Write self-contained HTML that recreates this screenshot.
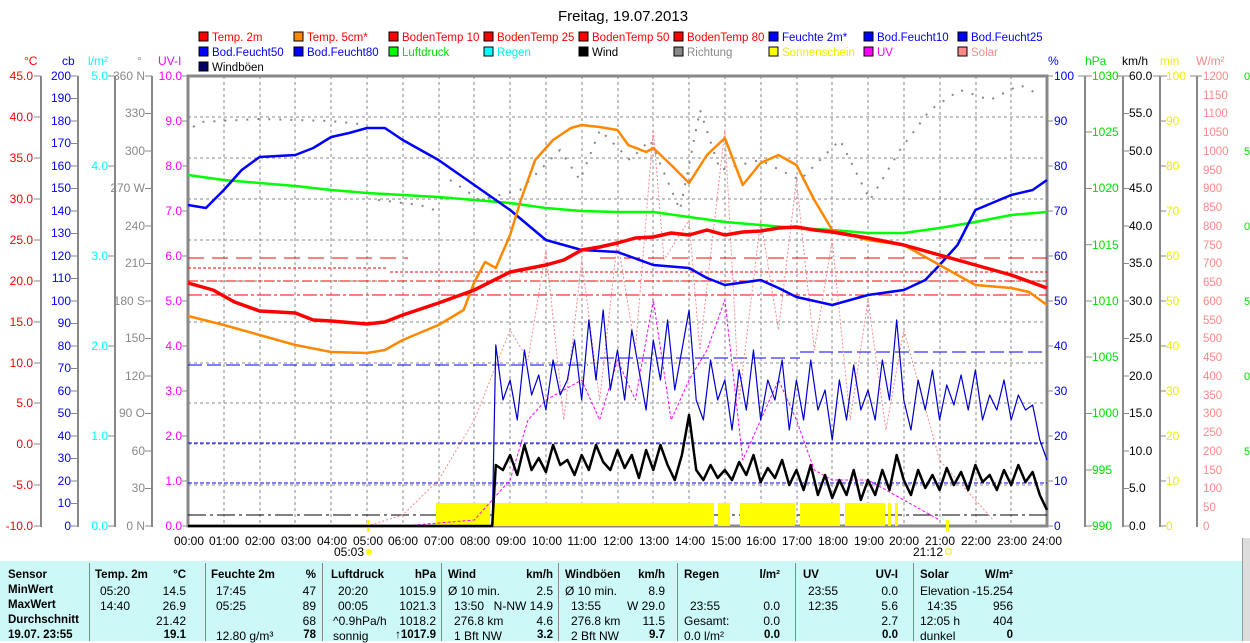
<!DOCTYPE html>
<html><head><meta charset="utf-8"><style>
body{margin:0;width:1250px;height:641px;overflow:hidden;background:#fff;font-family:"Liberation Sans",Arial,sans-serif;position:relative}
svg{position:absolute;left:0;top:0}
.tb{position:absolute;left:0;top:561px;width:1242px;height:80px;background:#ccf8f8;font-size:12px;color:#000}
.tb div{position:absolute;white-space:nowrap}
.b{font-weight:bold;font-size:11.5px}
.r{text-align:right}
.tb .sep{position:absolute;top:2px;width:1px;height:78px;background:#888}
</style></head><body>
<svg width="1250" height="561" font-family="Liberation Sans, Arial, sans-serif" font-size="12">
<text x="623" y="21" font-size="15" text-anchor="middle">Freitag, 19.07.2013</text>
<g font-size="11.5">
<rect x="199" y="32" width="9" height="9" fill="#f00" stroke="#000"/><text x="212" y="41" fill="#f00">Temp. 2m</text>
<rect x="294" y="32" width="9" height="9" fill="#f80" stroke="#000"/><text x="307" y="41" fill="#f00">Temp. 5cm*</text>
<rect x="389" y="32" width="9" height="9" fill="#f00" stroke="#000"/><text x="402" y="41" fill="#f00">BodenTemp 10</text>
<rect x="484" y="32" width="9" height="9" fill="#f00" stroke="#000"/><text x="497" y="41" fill="#f00">BodenTemp 25</text>
<rect x="579" y="32" width="9" height="9" fill="#f00" stroke="#000"/><text x="592" y="41" fill="#f00">BodenTemp 50</text>
<rect x="674" y="32" width="9" height="9" fill="#f00" stroke="#000"/><text x="687" y="41" fill="#f00">BodenTemp 80</text>
<rect x="769" y="32" width="9" height="9" fill="#00f" stroke="#000"/><text x="782" y="41" fill="#00f">Feuchte 2m*</text>
<rect x="864" y="32" width="9" height="9" fill="#00f" stroke="#000"/><text x="877" y="41" fill="#00f">Bod.Feucht10</text>
<rect x="958" y="32" width="9" height="9" fill="#00f" stroke="#000"/><text x="971" y="41" fill="#00f">Bod.Feucht25</text>
<rect x="199" y="47" width="9" height="9" fill="#00f" stroke="#000"/><text x="212" y="56" fill="#00f">Bod.Feucht50</text>
<rect x="294" y="47" width="9" height="9" fill="#00f" stroke="#000"/><text x="307" y="56" fill="#00f">Bod.Feucht80</text>
<rect x="389" y="47" width="9" height="9" fill="#0f0" stroke="#000"/><text x="402" y="56" fill="#0d0">Luftdruck</text>
<rect x="484" y="47" width="9" height="9" fill="#0ff" stroke="#000"/><text x="497" y="56" fill="#0ee">Regen</text>
<rect x="579" y="47" width="9" height="9" fill="#000" stroke="#000"/><text x="592" y="56">Wind</text>
<rect x="674" y="47" width="9" height="9" fill="#888" stroke="#000"/><text x="687" y="56" fill="#888">Richtung</text>
<rect x="769" y="47" width="9" height="9" fill="#ff0" stroke="#000"/><text x="782" y="56" fill="#ee0">Sonnenschein</text>
<rect x="864" y="47" width="9" height="9" fill="#f0f" stroke="#000"/><text x="877" y="56" fill="#f0f">UV</text>
<rect x="958" y="47" width="9" height="9" fill="#f88" stroke="#000"/><text x="971" y="56" fill="#f88">Solar</text>
<rect x="199" y="62" width="9" height="9" fill="#006" stroke="#000"/><text x="212" y="71">Windböen</text>
</g>
<text x="24" y="65" fill="#f00">°C</text><text x="62" y="65" fill="#00f">cb</text><text x="88" y="65" fill="#0ff">l/m²</text><text x="137" y="65" fill="#888">°</text><text x="158" y="65" fill="#f0f">UV-I</text>
<text x="1048" y="65" fill="#00f">%</text><text x="1085" y="65" fill="#0d0">hPa</text><text x="1122" y="65" fill="#000">km/h</text><text x="1160" y="65" fill="#ee0">min</text><text x="1196" y="65" fill="#f88">W/m²</text>
<g stroke="#888" stroke-width="2"><line x1="41" y1="76" x2="41" y2="527"/><line x1="78" y1="76" x2="78" y2="527"/><line x1="115" y1="76" x2="115" y2="527"/><line x1="152" y1="76" x2="152" y2="527"/>
<line x1="1085" y1="76" x2="1085" y2="527"/><line x1="1123" y1="76" x2="1123" y2="527"/><line x1="1160" y1="76" x2="1160" y2="527"/><line x1="1197" y1="76" x2="1197" y2="527"/></g>
<g fill="#f00" text-anchor="end"><text x="33" y="80">45.0</text><text x="33" y="121">40.0</text><text x="33" y="162">35.0</text><text x="33" y="203">30.0</text><text x="33" y="244">25.0</text><text x="33" y="285">20.0</text><text x="33" y="326">15.0</text><text x="33" y="367">10.0</text><text x="33" y="407">5.0</text><text x="33" y="448">0.0</text><text x="33" y="489">-5.0</text><text x="33" y="530">-10.0</text></g>
<g stroke="#888"><path d="M34 76h7M34 117h7M34 158h7M34 199h7M34 240h7M34 281h7M34 322h7M34 363h7M34 403h7M34 444h7M34 485h7M34 526h7M71 76h7M71 98.5h7M71 121h7M71 143.5h7M71 166h7M71 188.5h7M71 211h7M71 233.5h7M71 256h7M71 278.5h7M71 301h7M71 323.5h7M71 346h7M71 368.5h7M71 391h7M71 413.5h7M71 436h7M71 458.5h7M71 481h7M71 503.5h7M71 526h7M108 76h7M108 166h7M108 256h7M108 346h7M108 436h7M108 526h7M145 76h7M145 113.5h7M145 151h7M145 188.5h7M145 226h7M145 263.5h7M145 301h7M145 338.5h7M145 376h7M145 413.5h7M145 451h7M145 488.5h7M145 526h7M182 76h6M182 121h6M182 166h6M182 211h6M182 256h6M182 301h6M182 346h6M182 391h6M182 436h6M182 481h6M182 526h6"/></g>
<g fill="#00f" text-anchor="end"><text x="71" y="80">200</text><text x="71" y="102">190</text><text x="71" y="125">180</text><text x="71" y="147">170</text><text x="71" y="170">160</text><text x="71" y="192">150</text><text x="71" y="215">140</text><text x="71" y="237">130</text><text x="71" y="260">120</text><text x="71" y="282">110</text><text x="71" y="305">100</text><text x="71" y="327">90</text><text x="71" y="350">80</text><text x="71" y="372">70</text><text x="71" y="395">60</text><text x="71" y="417">50</text><text x="71" y="440">40</text><text x="71" y="462">30</text><text x="71" y="485">20</text><text x="71" y="507">10</text><text x="71" y="530">0</text></g>
<g fill="#0ff" text-anchor="end"><text x="108" y="80">5.0</text><text x="108" y="170">4.0</text><text x="108" y="260">3.0</text><text x="108" y="350">2.0</text><text x="108" y="440">1.0</text><text x="108" y="530">0.0</text></g>
<g fill="#888" text-anchor="end"><text x="145" y="80">360 N</text><text x="145" y="117">330</text><text x="145" y="155">300</text><text x="145" y="192">270 W</text><text x="145" y="230">240</text><text x="145" y="267">210</text><text x="145" y="305">180 S</text><text x="145" y="342">150</text><text x="145" y="380">120</text><text x="145" y="417">90  O</text><text x="145" y="455">60</text><text x="145" y="492">30</text><text x="145" y="530">0   N</text></g>
<g fill="#f0f" text-anchor="end"><text x="182" y="80">10.0</text><text x="182" y="125">9.0</text><text x="182" y="170">8.0</text><text x="182" y="215">7.0</text><text x="182" y="260">6.0</text><text x="182" y="305">5.0</text><text x="182" y="350">4.0</text><text x="182" y="395">3.0</text><text x="182" y="440">2.0</text><text x="182" y="485">1.0</text><text x="182" y="530">0.0</text></g>
<g stroke="#888"><path d="M1047 76h6M1047 121h6M1047 166h6M1047 211h6M1047 256h6M1047 301h6M1047 346h6M1047 391h6M1047 436h6M1047 481h6M1047 526h6M1078 76h14M1085 132h7M1085 188.5h7M1085 244.75h7M1085 301h7M1085 357h7M1085 413.5h7M1085 470h7M1085 526h7M1116 76h14M1123 113.5h6M1123 151h6M1123 188.5h6M1123 226h6M1123 263.5h6M1123 301h6M1123 338.5h6M1123 376h6M1123 413.5h6M1123 451h6M1123 488.5h6M1123 526h6M1153 76h14M1160 121h6M1160 166h6M1160 211h6M1160 256h6M1160 301h6M1160 346h6M1160 391h6M1160 436h6M1160 481h6M1160 526h6M1190 76h12"/></g>
<g fill="#00f"><text x="1054" y="80">100</text><text x="1054" y="125">90</text><text x="1054" y="170">80</text><text x="1054" y="215">70</text><text x="1054" y="260">60</text><text x="1054" y="305">50</text><text x="1054" y="350">40</text><text x="1054" y="395">30</text><text x="1054" y="440">20</text><text x="1054" y="485">10</text><text x="1054" y="530">0</text></g>
<g fill="#0d0"><text x="1092" y="80">1030</text><text x="1092" y="136">1025</text><text x="1092" y="192">1020</text><text x="1092" y="249">1015</text><text x="1092" y="305">1010</text><text x="1092" y="361">1005</text><text x="1092" y="417">1000</text><text x="1092" y="474">995</text><text x="1092" y="530">990</text></g>
<g fill="#000"><text x="1129" y="80">60.0</text><text x="1129" y="117">55.0</text><text x="1129" y="155">50.0</text><text x="1129" y="192">45.0</text><text x="1129" y="230">40.0</text><text x="1129" y="267">35.0</text><text x="1129" y="305">30.0</text><text x="1129" y="342">25.0</text><text x="1129" y="380">20.0</text><text x="1129" y="417">15.0</text><text x="1129" y="455">10.0</text><text x="1129" y="492">5.0</text><text x="1129" y="530">0.0</text></g>
<g fill="#ee0"><text x="1166" y="80">100</text><text x="1166" y="125">90</text><text x="1166" y="170">80</text><text x="1166" y="215">70</text><text x="1166" y="260">60</text><text x="1166" y="305">50</text><text x="1166" y="350">40</text><text x="1166" y="395">30</text><text x="1166" y="440">20</text><text x="1166" y="485">10</text><text x="1166" y="530">0</text></g>
<g fill="#f88" font-size="11.5"><text x="1203" y="80">1200</text><text x="1203" y="99">1150</text><text x="1203" y="117">1100</text><text x="1203" y="136">1050</text><text x="1203" y="155">1000</text><text x="1203" y="174">950</text><text x="1203" y="192">900</text><text x="1203" y="211">850</text><text x="1203" y="230">800</text><text x="1203" y="249">750</text><text x="1203" y="267">700</text><text x="1203" y="286">650</text><text x="1203" y="305">600</text><text x="1203" y="324">550</text><text x="1203" y="342">500</text><text x="1203" y="361">450</text><text x="1203" y="380">400</text><text x="1203" y="399">350</text><text x="1203" y="417">300</text><text x="1203" y="436">250</text><text x="1203" y="455">200</text><text x="1203" y="474">150</text><text x="1203" y="492">100</text><text x="1203" y="511">50</text><text x="1203" y="530">0</text></g>
<g fill="#0d0" font-size="11"><text x="1244" y="80">0</text><text x="1244" y="155">5</text><text x="1244" y="230">0</text><text x="1244" y="305">5</text><text x="1244" y="380">0</text><text x="1244" y="455">5</text></g>
<g stroke="#888" stroke-dasharray="3,3"><path d="M224 76v450M260 76v450M295 76v450M331 76v450M367 76v450M403 76v450M439 76v450M474 76v450M510 76v450M546 76v450M582 76v450M618 76v450M653 76v450M689 76v450M725 76v450M761 76v450M797 76v450M832 76v450M868 76v450M904 76v450M940 76v450M976 76v450M1011 76v450M188 117h859M188 158h859M188 199h859M188 240h859M188 281h859M188 322h859M188 363h859M188 403h859M188 444h859M188 485h859"/></g>
<rect x="188" y="76" width="859" height="450" fill="none" stroke="#888" stroke-width="3"/>
<path d="M188 258h220M600 258h447" stroke="#f00" stroke-dasharray="16,8"/>
<path d="M188 268h200M390 272h657" stroke="#f00" stroke-dasharray="3,2"/>
<path d="M188 281h859" stroke="#f00" stroke-dasharray="10,3,3,3"/>
<path d="M188 295h859" stroke="#f00" stroke-dasharray="14,3,3,3"/>
<path d="M188 365h400M600 358h200M800 352h247" stroke="#00f" stroke-dasharray="14,5"/>
<path d="M188 443h859M188 483h859" stroke="#00f" stroke-dasharray="4,2"/>
<path d="M188 515h859" stroke="#000" stroke-dasharray="18,4,3,4"/>
<g fill="#ff0"><rect x="436" y="503" width="54" height="23"/><rect x="492" y="503" width="222" height="23"/><rect x="718" y="503" width="12" height="23"/><rect x="740" y="503" width="55" height="23"/><rect x="800" y="503" width="40" height="23"/><rect x="845" y="503" width="40" height="23"/><rect x="888" y="503" width="3" height="23"/><rect x="895" y="503" width="3" height="23"/></g>
<rect x="367" y="520" width="3" height="12" fill="#ff0"/><rect x="946" y="520" width="3" height="12" fill="#ff0"/>
<path d="M193 127L200 122L260 119L330 121L360 124L372 130M378 200L420 205L440 212M450 180L480 200L520 190L560 150L580 180L600 130L630 160L650 140L680 210L700 110L720 170L760 160L800 180L840 140L870 200L900 150L930 110L960 90L990 100L1020 85L1040 95" fill="none" stroke="#888" stroke-width="2" stroke-dasharray="2,9"/>
<g transform="translate(188,0) scale(35.79,1)" fill="none" stroke-linejoin="round">
<polyline vector-effect="non-scaling-stroke" stroke="#f88" stroke-dasharray="2,2" points="5,526 6,515 7,480 8,420 9,330 9.5,360 10,250 10.5,420 11,260 11.5,400 12,240 12.5,350 13,130 13.3,260 14,220 14.3,350 15,130 15.4,400 16,220 16.5,330 17,180 17.5,350 18,240 18.5,420 19,300 19.5,430 20,330 21,460 22,500 22.5,520"/>
<polyline vector-effect="non-scaling-stroke" stroke="#f0f" stroke-dasharray="3,2" points="6,526 8,520 9,480 9.5,420 10,400 11,380 11.5,420 12,360 12.5,400 13,300 13.5,420 14,380 14.5,350 15,300 15.5,460 16,420 16.5,380 17,420 17.5,470 18,480 19,480 20,500 21,520"/>
<polyline vector-effect="non-scaling-stroke" stroke="#0f0" stroke-width="2.5" points="0,175 1,180 2,183 3,186 4,190 5,193 6,195 7,197 8,200 9,203 10,208 11,211 12,212 13,212 14,217 15,222 16,225 17,228 18,230 19,233 20,233 21,228 22,222 23,215 24,212"/>
<polyline vector-effect="non-scaling-stroke" stroke="#00f" stroke-width="2.5" points="0,205 0.5,208 1,190 1.5,170 2,157 3,155 3.5,148 4,137 4.5,133 5,128 5.5,128 6,140 7,160 8,185 9,210 10,240 11,250 12,252 13,265 14,268 14.5,278 15,285 16,280 16.5,288 17,297 18,305 19,295 20,290 20.6,280 21,265 21.5,245 22,210 23,195 23.6,190 24,180"/>
<polyline vector-effect="non-scaling-stroke" stroke="#f80" stroke-width="2.5" points="0,316 1,325 2,335 3,345 4,352 5,353 5.5,350 6,340 7,325 7.7,310 8,282 8.3,262 8.6,268 9,235 9.3,200 9.7,160 10.2,140 10.7,128 11,125 11.5,127 12,130 12.3,145 12.8,152 13,148 13.5,165 14,183 14.5,155 15,138 15.5,185 16,163 16.5,155 17,165 17.5,200 18,230 19,240 20,245 21,265 22,285 23,288 23.5,292 24,305"/>
<polyline vector-effect="non-scaling-stroke" stroke="#f00" stroke-width="3.5" points="0,283 0.7,290 1.3,302 2,311 3,313 3.5,320 4,321 5,324 5.5,322 6,315 7,303 8,290 9,272 10,265 10.5,260 11,250 11.5,247 12,243 12.5,238 13,237 13.5,233 14,235 14.5,230 15,235 15.5,232 16,231 16.5,228 17,227 17.5,230 18,232 19,238 20,245 21,255 22,265 23,275 24,288"/>
<polyline vector-effect="non-scaling-stroke" stroke="#00c" stroke-width="1.2" points="8.5,526 8.6,345 8.8,400 9,380 9.2,420 9.4,350 9.6,395 9.8,375 10,410 10.2,360 10.4,395 10.6,380 10.8,340 11,400 11.2,320 11.4,380 11.6,310 11.8,390 12,350 12.2,400 12.4,330 12.6,370 12.8,410 13,340 13.2,380 13.4,320 13.6,390 13.8,350 14,310 14.2,400 14.4,420 14.6,360 14.8,400 15,380 15.2,430 15.4,370 15.6,410 15.8,350 16,420 16.2,380 16.4,400 16.6,360 16.8,430 17,380 17.2,420 17.4,360 17.6,410 17.8,390 18,440 18.2,380 18.4,420 18.6,365 18.8,410 19,390 19.2,420 19.4,360 19.6,400 19.8,320 20,400 20.2,430 20.4,380 20.6,410 20.8,370 21,420 21.2,385 21.4,405 21.6,375 21.8,410 22,370 22.2,420 22.4,395 22.6,410 22.8,380 23,420 23.2,395 23.4,410 23.6,405 23.8,440 24,460"/>
<polyline vector-effect="non-scaling-stroke" stroke="#000" stroke-width="2.5" points="0,526 8.5,526 8.6,465 8.8,470 9,455 9.2,475 9.4,445 9.6,470 9.8,458 10,472 10.2,445 10.4,465 10.6,460 10.8,475 11,455 11.2,470 11.4,445 11.6,462 11.8,470 12,450 12.2,468 12.4,455 12.6,478 12.8,450 13,470 13.2,445 13.4,465 13.6,480 13.8,455 14,415 14.2,470 14.4,480 14.6,465 14.8,478 15,470 15.2,480 15.4,462 15.6,475 15.8,455 16,482 16.2,468 16.4,478 16.6,460 16.8,485 17,470 17.2,490 17.4,465 17.6,495 17.8,475 18,498 18.2,480 18.4,495 18.6,470 18.8,500 19,480 19.2,495 19.4,470 19.6,490 19.8,455 20,480 20.2,495 20.4,470 20.6,488 20.8,475 21,490 21.2,468 21.4,485 21.6,472 21.8,490 22,465 22.2,482 22.4,475 22.6,490 22.8,470 23,485 23.2,465 23.4,482 23.6,472 23.8,495 24,510"/>
</g>
<g text-anchor="middle"><text x="189" y="545">00:00</text><text x="224" y="545">01:00</text><text x="260" y="545">02:00</text><text x="296" y="545">03:00</text><text x="332" y="545">04:00</text><text x="368" y="545">05:00</text><text x="403" y="545">06:00</text><text x="439" y="545">07:00</text><text x="475" y="545">08:00</text><text x="511" y="545">09:00</text><text x="547" y="545">10:00</text><text x="582" y="545">11:00</text><text x="618" y="545">12:00</text><text x="654" y="545">13:00</text><text x="690" y="545">14:00</text><text x="726" y="545">15:00</text><text x="761" y="545">16:00</text><text x="797" y="545">17:00</text><text x="833" y="545">18:00</text><text x="869" y="545">19:00</text><text x="904" y="545">20:00</text><text x="940" y="545">21:00</text><text x="976" y="545">22:00</text><text x="1012" y="545">23:00</text><text x="1047" y="545">24:00</text>
<text x="349" y="556">05:03</text><text x="928" y="556">21:12</text></g>
<circle cx="369" cy="552" r="3" fill="#ff0"/><rect x="946" y="549" width="5" height="5" fill="none" stroke="#ee0"/>
</svg>
<div style="position:absolute;left:1242px;top:538px;width:8px;height:103px;background:#ddd;border-left:1px solid #999"></div>
<div class="tb">
<div class="sep" style="left:89px"></div><div class="sep" style="left:205px"></div><div class="sep" style="left:322px"></div><div class="sep" style="left:441px"></div><div class="sep" style="left:558px"></div><div class="sep" style="left:677px"></div><div class="sep" style="left:795px"></div><div class="sep" style="left:913px"></div>
<div class="b" style="left:8px;top:8px">Sensor</div><div class="b" style="left:8px;top:23px">MinWert</div><div class="b" style="left:8px;top:38px">MaxWert</div><div class="b" style="left:8px;top:53px">Durchschnitt</div><div class="b" style="left:8px;top:68px">19.07. 23:55</div>
<div class="b" style="left:95px;top:8px">Temp. 2m</div><div class="b r" style="right:1056px;top:8px">°C</div>
<div style="left:100px;top:23px">05:20</div><div class="r" style="right:1056px;top:23px">14.5</div>
<div style="left:100px;top:38px">14:40</div><div class="r" style="right:1056px;top:38px">26.9</div>
<div class="r" style="right:1056px;top:53px">21.42</div><div class="b r" style="right:1056px;top:68px">19.1</div>
<div class="b" style="left:211px;top:8px">Feuchte 2m</div><div class="b r" style="right:926px;top:8px">%</div>
<div style="left:216px;top:23px">17:45</div><div class="r" style="right:926px;top:23px">47</div>
<div style="left:216px;top:38px">05:25</div><div class="r" style="right:926px;top:38px">89</div>
<div class="r" style="right:926px;top:53px">68</div><div style="left:216px;top:68px">12.80 g/m³</div><div class="b r" style="right:926px;top:68px">78</div>
<div class="b" style="left:331px;top:8px">Luftdruck</div><div class="b r" style="right:806px;top:8px">hPa</div>
<div style="left:338px;top:23px">20:20</div><div class="r" style="right:806px;top:23px">1015.9</div>
<div style="left:338px;top:38px">00:05</div><div class="r" style="right:806px;top:38px">1021.3</div>
<div style="left:333px;top:53px">^0.9hPa/h</div><div class="r" style="right:806px;top:53px">1018.2</div>
<div style="left:333px;top:68px">sonnig</div><div class="b r" style="right:806px;top:68px">↑1017.9</div>
<div class="b" style="left:448px;top:8px">Wind</div><div class="b r" style="right:689px;top:8px">km/h</div>
<div style="left:448px;top:23px">Ø 10 min.</div><div class="r" style="right:689px;top:23px">2.5</div>
<div style="left:454px;top:38px">13:50</div><div class="r" style="right:689px;top:38px">N-NW 14.9</div>
<div style="left:454px;top:53px">276.8 km</div><div class="r" style="right:689px;top:53px">4.6</div>
<div style="left:454px;top:68px">1 Bft NW</div><div class="b r" style="right:689px;top:68px">3.2</div>
<div class="b" style="left:565px;top:8px">Windböen</div><div class="b r" style="right:577px;top:8px">km/h</div>
<div style="left:565px;top:23px">Ø 10 min.</div><div class="r" style="right:577px;top:23px">8.9</div>
<div style="left:571px;top:38px">13:55</div><div class="r" style="right:577px;top:38px">W 29.0</div>
<div style="left:571px;top:53px">276.8 km</div><div class="r" style="right:577px;top:53px">11.5</div>
<div style="left:571px;top:68px">2 Bft NW</div><div class="b r" style="right:577px;top:68px">9.7</div>
<div class="b" style="left:684px;top:8px">Regen</div><div class="b r" style="right:462px;top:8px">l/m²</div>
<div style="left:690px;top:38px">23:55</div><div class="r" style="right:462px;top:38px">0.0</div>
<div style="left:684px;top:53px">Gesamt:</div><div class="r" style="right:462px;top:53px">0.0</div>
<div style="left:684px;top:68px">0.0 l/m²</div><div class="b r" style="right:462px;top:68px">0.0</div>
<div class="b" style="left:803px;top:8px">UV</div><div class="b r" style="right:344px;top:8px">UV-I</div>
<div style="left:808px;top:23px">23:55</div><div class="r" style="right:344px;top:23px">0.0</div>
<div style="left:808px;top:38px">12:35</div><div class="r" style="right:344px;top:38px">5.6</div>
<div class="r" style="right:344px;top:53px">2.7</div><div class="b r" style="right:344px;top:68px">0.0</div>
<div class="b" style="left:920px;top:8px">Solar</div><div class="b r" style="right:229px;top:8px">W/m²</div>
<div style="left:920px;top:23px">Elevation</div><div class="r" style="right:229px;top:23px">-15.254</div>
<div style="left:927px;top:38px">14:35</div><div class="r" style="right:229px;top:38px">956</div>
<div style="left:920px;top:53px">12:05 h</div><div class="r" style="right:229px;top:53px">404</div>
<div style="left:920px;top:68px">dunkel</div><div class="b r" style="right:229px;top:68px">0</div>
</div>
</body></html>
